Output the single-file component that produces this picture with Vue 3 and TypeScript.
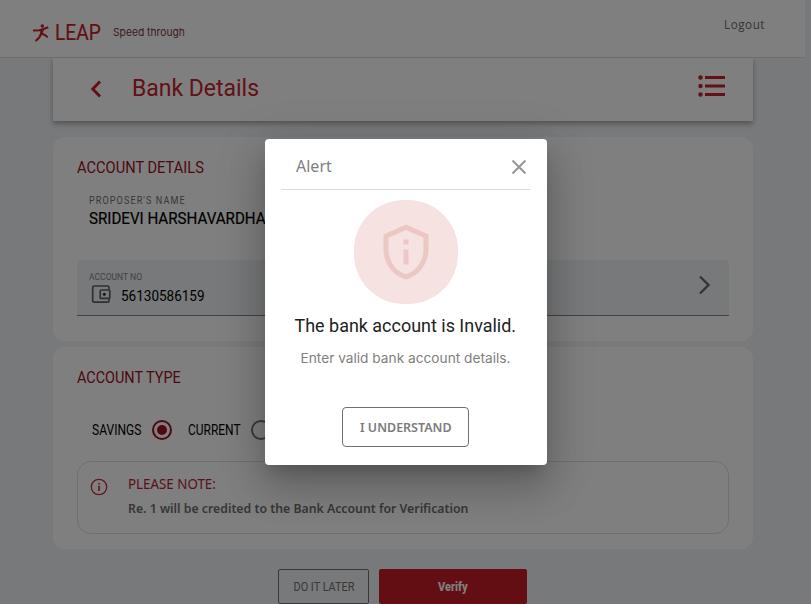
<script setup lang="ts">
import { ref } from 'vue'

type AccountType = 'SAVINGS' | 'CURRENT'

const accountType = ref<AccountType>('SAVINGS')
const accountTypes: AccountType[] = ['SAVINGS', 'CURRENT']
const labelWidths: Record<AccountType, number> = { SAVINGS: 49, CURRENT: 53 }

// Condenses a line of text horizontally to the given width.
const vFit = {
  mounted(el: HTMLElement, binding: { value: number }) {
    const natural = el.offsetWidth
    if (natural > 0) el.style.transform = `scaleX(${binding.value / natural})`
  },
}
</script>

<template>
  <div class="screen">
    <header class="topbar">
      <svg class="runner" viewBox="0 0 18 19" width="18" height="19">
        <circle cx="10.3" cy="2" r="1.8" />
        <path class="limb" d="M1 6.600 8 6.200 16.300 3.300M8.800 10.200q-1 4-5.400 6.800M9 9.700l3.500 1 3.300 2.500" />
        <path d="M7 5.300 12.300 4.500 11.200 8 10.600 11 7.600 11.300 8.300 7.500Z" />
      </svg>
      <div class="brand"><span v-fit="46" class="fit">LEAP</span></div>
      <div class="tagline"><span v-fit="72" class="fit">Speed through</span></div>
      <div class="logout"><span v-fit="41" class="fit">Logout</span></div>
    </header>

    <section class="titlebar">
      <svg class="back" viewBox="0 0 12 18" width="12" height="18"><path d="M10 1.500 2.800 9l7.200 7.500" /></svg>
      <h1><span v-fit="127" class="fit">Bank Details</span></h1>
      <svg class="list" viewBox="0 0 27 22" width="27" height="22">
        <circle cx="2.500" cy="2.500" r="2.200" /><circle cx="2.500" cy="11" r="2.200" /><circle cx="2.500" cy="19.500" r="2.200" />
        <path d="M7 1h20v3H7zM7 9.500h20v3H7zM7 18h20v3H7z" />
      </svg>
    </section>

    <section class="card details">
      <h2><span v-fit="127" class="fit">ACCOUNT DETAILS</span></h2>
      <div class="caption"><span v-fit="97" class="fit">PROPOSER'S NAME</span></div>
      <div class="name"><span v-fit="187" class="fit">SRIDEVI HARSHAVARDHAN</span></div>
      <div class="field">
        <div class="field-main">
          <div class="field-label"><span v-fit="53" class="fit">ACCOUNT NO</span></div>
          <div class="field-value">
            <svg viewBox="0 0 20 20" width="20" height="20">
              <path d="M18 5.500V3.200A1.300 1.300 0 0 0 16.700 2H3A1.300 1.300 0 0 0 1.700 3.200v13.600A1.300 1.300 0 0 0 3 18.200h13.700a1.300 1.300 0 0 0 1.300-1.400V14.500" />
              <rect x="9.200" y="6" width="9.600" height="8.400" rx="1" />
              <circle cx="13.300" cy="10.200" r="1.500" />
            </svg>
            <span v-fit="84" class="fit">56130586159</span>
          </div>
        </div>
        <svg class="next" viewBox="0 0 13 20" width="13" height="20"><path d="M2 1.500 10.500 10 2 18.500" /></svg>
      </div>
    </section>

    <section class="card type">
      <h2><span v-fit="104" class="fit">ACCOUNT TYPE</span></h2>
      <div class="options">
        <label v-for="t in accountTypes" :key="t" :class="['option', t.toLowerCase()]" @click="accountType = t">
          <span class="option-label"><span v-fit="labelWidths[t]" class="fit">{{ t }}</span></span>
          <span :class="['radio', { on: accountType === t }]"></span>
        </label>
      </div>
      <div class="note">
        <svg viewBox="0 0 18 18" width="18" height="18">
          <circle cx="9" cy="9" r="7.700" />
          <path d="M8.200 7.800h1.700V13H8.200zM8.200 5h1.700v1.500H8.200z" />
        </svg>
        <div>
          <div class="note-title"><span v-fit="88" class="fit">PLEASE NOTE:</span></div>
          <div class="note-text"><span v-fit="340" class="fit">Re. 1 will be credited to the Bank Account for Verification</span></div>
        </div>
      </div>
    </section>

    <div class="actions">
      <button class="later"><span v-fit="61" class="fit mid">DO IT LATER</span></button>
      <button class="verify"><span v-fit="30" class="fit mid">Verify</span></button>
    </div>

    <div class="overlay">
      <div class="dialog" role="alertdialog">
        <div class="dialog-head">
          <span v-fit="36" class="fit">Alert</span>
          <svg viewBox="0 0 16 16" width="16" height="16"><path d="m1.500 1.500 13 13m0-13-13 13" /></svg>
        </div>
        <div class="badge">
          <svg viewBox="0 0 24 24" width="60" height="60">
            <path d="M12 1 3 5v6c0 5.550 3.840 10.740 9 12 5.160-1.260 9-6.450 9-12V5l-9-4zm7 10c0 4.520-2.980 8.690-7 9.930-4.020-1.240-7-5.410-7-9.930V6.300l7-3.110 7 3.110V11zM11 11h2v6h-2zM11 7h2v2h-2z" />
          </svg>
        </div>
        <div class="headline"><span v-fit="222" class="fit mid">The bank account is Invalid.</span></div>
        <div class="message"><span v-fit="210" class="fit mid">Enter valid bank account details.</span></div>
        <button class="confirm"><span v-fit="92" class="fit mid">I UNDERSTAND</span></button>
      </div>
    </div>
  </div>
</template>

<style>
html, body { overflow: hidden; }
</style>

<style scoped>
* { box-sizing: border-box; }
.screen {
  position: relative;
  width: 811px;
  height: 604px;
  overflow: hidden;
  background: #f0f2f5;
  font-family: Roboto, "Liberation Sans", sans-serif;
  color: #000;
}
.fit { display: inline-block; white-space: nowrap; transform-origin: left center; }
.fit.mid { transform-origin: center; }
svg { display: block; flex: none; }
h1, h2 { margin: 0; font-weight: 400; }
button { padding: 0; display: flex; align-items: center; justify-content: center; font-family: inherit; }

.topbar {
  width: 805px;
  height: 58px;
  padding-left: 32px;
  display: flex;
  background: #fff;
  border-bottom: 1px solid #dedede;
}
.runner { margin-top: 24px; fill: #c5222b; }
.runner .limb { fill: none; stroke: #c5222b; stroke-width: 2; }
.brand { width: 45px; margin: 18px 0 0 5px; font-size: 22.500px; line-height: 28px; color: #c5222b; -webkit-text-stroke: .2px #c5222b; }
.tagline { margin: 24px 0 0 13px; font-family: Inter, sans-serif; font-size: 11px; line-height: 16px; color: #7b3a42; }
.logout { width: 41px; margin: 17px 40px 0 auto; font-family: "Open Sans", sans-serif; font-size: 12.500px; line-height: 16px; letter-spacing: .6px; color: #6c6c6c; }

.titlebar {
  width: 700px;
  height: 63px;
  margin-left: 53px;
  padding: 0 28px 0 37px;
  display: flex;
  background: #fff;
  box-shadow: 0 3px 5px rgba(0, 0, 0, .3);
}
.back { margin-top: 22px; fill: none; stroke: #c5222b; stroke-width: 3; }
h1 { margin: 14px 0 0 30px; font-size: 23.500px; line-height: 32px; color: #c5222b; }
.list { margin: 16.500px 0 0 auto; fill: #c5222b; }

.card { width: 700px; margin-left: 53px; padding: 21px 24px 0; background: #fff; border-radius: 12px; }
.details { height: 204px; margin-top: 16px; }
.type { height: 202px; margin-top: 6px; }
h2 { margin-left: -.5px; font-size: 16.500px; line-height: 20px; color: #9a1220; }
.caption { margin: 16px 0 0 12px; font-size: 10px; line-height: 14px; letter-spacing: 1.200px; color: #707070; }
.name { margin: 1px 0 0 11.500px; font-size: 16.500px; line-height: 20px; -webkit-text-stroke: .2px #000; }
.field {
  height: 56px;
  margin-top: 31px;
  padding: 10px 18px 0 12px;
  display: flex;
  justify-content: space-between;
  background: #eff2f5;
  border-bottom: 1px solid #858585;
  border-radius: 4px 4px 0 0;
}
.field-label { font-size: 9.500px; line-height: 13px; color: #858585; }
.field-value { display: flex; gap: 9.500px; margin: 1px 0 0 2px; font-size: 14px; line-height: 24px; }
.field-value svg { fill: none; stroke: #606060; stroke-width: 1.700; }
.field-value svg circle { fill: #303030; stroke: none; }
.next { margin-top: 5px; fill: none; stroke: #686868; stroke-width: 2.300; }

.options { display: flex; gap: 16px; height: 20px; margin: 32px 0 0 15px; }
.option { display: flex; }
.option-label { width: 60px; font-size: 14px; line-height: 20px; }
.current .option-label { width: 63px; }
.radio { width: 20px; height: 20px; display: grid; place-items: center; border: 2px solid #757575; border-radius: 50%; }
.radio.on { border-color: #9a1220; }
.radio.on::after { content: ""; width: 10px; height: 10px; border-radius: 50%; background: #9a1220; }

.note { height: 73px; margin-top: 21px; padding: 12px 0 0 12px; display: flex; gap: 19.500px; border: 1px solid #edd9dc; border-radius: 14px; }
.note svg { margin-top: 4px; fill: none; stroke: #c5303c; stroke-width: 1.300; }
.note svg path { fill: #c5303c; stroke: none; }
.note-title { font-family: "Noto Sans", sans-serif; font-size: 13.500px; line-height: 20px; color: #b02432; }
.note-text { margin-top: 5px; font-family: "Noto Sans", sans-serif; font-size: 12.500px; font-weight: 600; line-height: 20px; color: #6e6e6e; }

.actions { display: flex; gap: 10px; margin: 20px 0 0 278px; }
.later { width: 91px; height: 35px; font-size: 12.500px; color: #707070; background: transparent; border: 1px solid #707070; border-radius: 2px; }
.verify { width: 148px; height: 35px; font-size: 12.500px; font-weight: 800; color: #fff; background: #c41c26; border: 0; border-radius: 2px; }

.overlay { position: absolute; inset: 0; background: rgba(0, 0, 0, .5); padding: 139px 0 0 265px; }
.dialog {
  width: 282px;
  height: 326px;
  padding: 0 17px 0 16px;
  display: flex;
  flex-direction: column;
  align-items: center;
  background: #fff;
  border-radius: 4px;
  box-shadow: 0 11px 15px -7px rgba(0, 0, 0, .2), 0 24px 38px 3px rgba(0, 0, 0, .14), 0 9px 46px 8px rgba(0, 0, 0, .12);
}
.dialog-head {
  width: 250px;
  height: 51px;
  padding: 5px 4px 0 15px;
  display: flex;
  align-items: center;
  align-self: flex-start;
  justify-content: space-between;
  border-bottom: 1px solid #dcdcdc;
  font-family: "Noto Sans", sans-serif;
  font-size: 16px;
  color: #808080;
}
.dialog-head span { margin-bottom: 2px; }
.dialog-head svg { fill: none; stroke: #929292; stroke-width: 1.800; }
.badge { width: 104px; height: 104px; margin-top: 10px; display: grid; place-items: center; background: #f5e2e1; border-radius: 50px; }
.badge svg { fill: #ecc8c5; }
.headline { margin-top: 10px; font-size: 19px; line-height: 24px; color: #212121; }
.message { margin-top: 10px; font-family: Inter, sans-serif; font-size: 13.500px; line-height: 20px; color: #808080; }
.confirm { width: 127px; height: 40px; margin-top: 39px; padding-bottom: 1px; background: #fff; border: 1px solid #707070; border-radius: 4px; font-family: "Noto Sans", sans-serif; font-size: 13px; font-weight: 600; color: #7b7b7b; }
</style>
